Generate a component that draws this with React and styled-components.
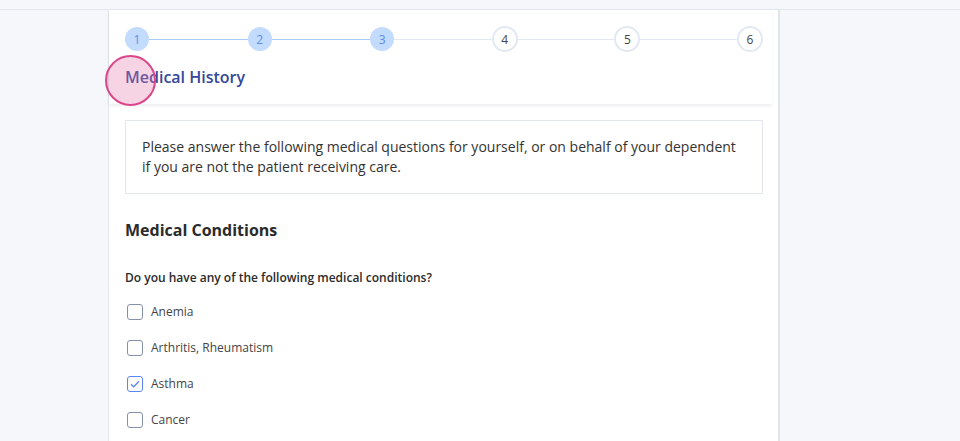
import React from "react";
import styled, { createGlobalStyle } from "styled-components";

const Global = createGlobalStyle`
  html, body { margin: 0; padding: 0; background: #f5f7fb; }
  body { font-family: "Open Sans", "Noto Sans", sans-serif; color: #333; }
  * { box-sizing: border-box; }
`;

const TopStrip = styled.div`
  height: 10px;
  border-bottom: 1px solid #e1e5ee;
  background: #f5f7fb;
`;

const Layout = styled.div`
  display: flex;
  padding-left: 108px;
`;

const Card = styled.main`
  position: relative;
  width: 672px;
  min-height: 431px;
  background: #fff;
  border-left: 1px solid #e1e5ee;
  border-right: 2px solid #e1e5ee;
`;

const Header = styled.header`
  margin-right: 6px;
  padding: 16px 10px 15px 16px;
  box-shadow: 0 2px 3px rgba(30, 40, 70, 0.08);
`;

const Stepper = styled.ol`
  display: flex;
  align-items: center;
  list-style: none;
  margin: 0;
  padding: 0;
`;

const Step = styled.li`
  width: 24px;
  height: 24px;
  flex: none;
  border-radius: 50%;
  display: flex;
  align-items: center;
  justify-content: center;
  font-size: 12px;
  background: ${(p) => (p.$done ? "#c3dbfd" : "#fff")};
  color: ${(p) => (p.$done ? "#5b8fe8" : "#444")};
  border: ${(p) => (p.$done ? "none" : "2px solid #e3e9f2")};
  ${(p) => (p.$done ? "" : "width:26px;height:26px;margin:0 -1px;")}
`;

const Connector = styled.span`
  flex: 1;
  height: 1px;
  background: ${(p) => (p.$done ? "#a9cbfa" : "#e3e9f2")};
`;

const Title = styled.h1`
  margin: 13px 0 0;
  font-size: 16px;
  line-height: 24px;
  font-weight: 600;
  color: #35489a;
`;

const Body = styled.section`
  padding: 16px 15px 0 16px;
`;

const InfoBox = styled.div`
  border: 1px solid #e1e5ee;
  padding: 16px;
  font-size: 14px;
  line-height: 20px;
  color: #333;
`;

const SectionTitle = styled.h2`
  margin: 24px 0 0;
  font-size: 16px;
  line-height: 24px;
  font-weight: 700;
  color: #2b2b2b;
`;

const Question = styled.p`
  margin: 27px 0 0;
  font-size: 12px;
  line-height: 18px;
  font-weight: 600;
  color: #2b2b2b;
`;

const OptionList = styled.div`
  display: flex;
  flex-direction: column;
  gap: 18px;
  margin-top: 16px;
  padding-left: 2px;
`;

const Option = styled.label`
  display: flex;
  align-items: center;
  gap: 8px;
  font-size: 12px;
  line-height: 18px;
  color: #444;
`;

const Box = styled.span`
  width: 16px;
  height: 16px;
  border-radius: 3px;
  border: 1.5px solid ${(p) => (p.$checked ? "#5b86f0" : "#8591a8")};
  display: flex;
  align-items: center;
  justify-content: center;
`;

const Touch = styled.div`
  position: absolute;
  left: -4px;
  top: 45px;
  width: 51px;
  height: 51px;
  border-radius: 50%;
  border: 2px solid #d9478a;
  background: rgba(228, 120, 170, 0.32);
  pointer-events: none;
`;

const steps = [1, 2, 3, 4, 5, 6];
const options = [
  { label: "Anemia", checked: false },
  { label: "Arthritis, Rheumatism", checked: false },
  { label: "Asthma", checked: true },
  { label: "Cancer", checked: false },
];

export default function App() {
  return (
    <>
      <Global />
      <TopStrip />
      <Layout>
        <Card>
          <Header>
            <Stepper>
              {steps.map((n, i) => (
                <React.Fragment key={n}>
                  {i > 0 && <Connector $done={n <= 3} />}
                  <Step $done={n <= 3}>{n}</Step>
                </React.Fragment>
              ))}
            </Stepper>
            <Title>Medical History</Title>
          </Header>
          <Body>
            <InfoBox>
              Please answer the following medical questions for yourself, or on behalf of your dependent
              if you are not the patient receiving care.
            </InfoBox>
            <SectionTitle>Medical Conditions</SectionTitle>
            <Question>Do you have any of the following medical conditions?</Question>
            <OptionList>
              {options.map((o) => (
                <Option key={o.label}>
                  <Box $checked={o.checked}>
                    {o.checked && (
                      <svg width="10" height="8" viewBox="0 0 10 8" fill="none">
                        <path d="M1 4.2 L3.7 6.8 L9 1.2" stroke="#5b86f0" strokeWidth="1.3" />
                      </svg>
                    )}
                  </Box>
                  {o.label}
                </Option>
              ))}
            </OptionList>
          </Body>
          <Touch />
        </Card>
      </Layout>
    </>
  );
}
